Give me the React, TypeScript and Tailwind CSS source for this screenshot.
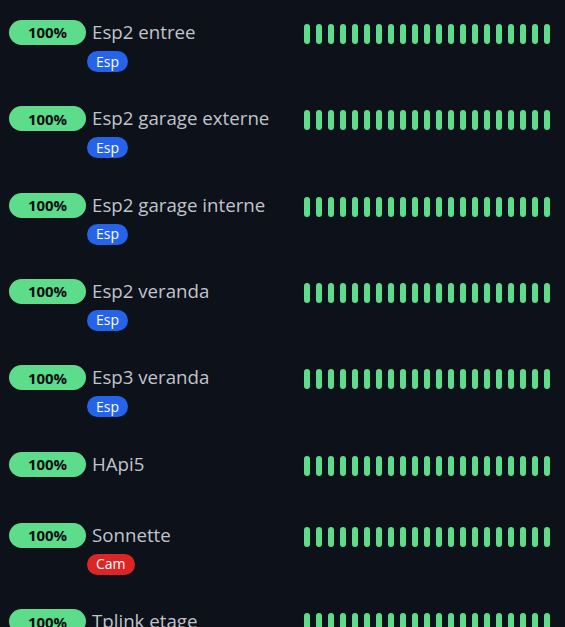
type Device = {
  name: string;
  battery: number;
  tag?: 'Esp' | 'Cam';
};

const devices: Device[] = [
  { name: 'Esp2 entree', battery: 100, tag: 'Esp' },
  { name: 'Esp2 garage externe', battery: 100, tag: 'Esp' },
  { name: 'Esp2 garage interne', battery: 100, tag: 'Esp' },
  { name: 'Esp2 veranda', battery: 100, tag: 'Esp' },
  { name: 'Esp3 veranda', battery: 100, tag: 'Esp' },
  { name: 'HApi5', battery: 100 },
  { name: 'Sonnette', battery: 100, tag: 'Cam' },
  { name: 'Tplink etage', battery: 100 },
];

const BAR_COUNT = 21;

export default function App() {
  return (
    <div
      className="h-[627px] w-[565px] overflow-hidden bg-[#0d1119] pl-[9px] pr-[15px] pt-[20px]"
      style={{ fontFamily: '"Open Sans", "Noto Sans", sans-serif' }}
    >
      {devices.map((device) => (
        <DeviceRow key={device.name} device={device} />
      ))}
    </div>
  );
}

function DeviceRow({ device }: { device: Device }) {
  return (
    <div className={`flex items-start ${device.tag ? 'h-[86.33px]' : 'h-[71.33px]'}`}>
      <div className="flex h-[25px] w-[77px] shrink-0 items-center justify-center rounded-full bg-[#5ddc8b] text-[15px] font-bold text-[#0b0f14]">
        {device.battery}%
      </div>

      <div className="ml-[1px] min-w-0 flex-1">
        <div className="pl-[5px] text-[18.7px] leading-[23px] whitespace-nowrap text-[#c0c4cc]">{device.name}</div>
        {device.tag ? <Tag label={device.tag} /> : null}
      </div>

      <div className="mt-[4px] flex w-[246px] shrink-0 gap-[6px]">
        {Array.from({ length: BAR_COUNT }).map((_, i) => (
          <div key={i} className="h-[20px] w-[6px] rounded-full bg-[#5ddc8b]" />
        ))}
      </div>
    </div>
  );
}

function Tag({ label }: { label: 'Esp' | 'Cam' }) {
  const toneClassName = label === 'Cam' ? 'bg-[#dc2626]' : 'bg-[#2563eb]';

  return (
    <div
      className={`mt-[8px] inline-flex h-[21px] items-center rounded-full px-[9px] text-[14px] leading-none text-white ${toneClassName}`}
    >
      {label}
    </div>
  );
}
